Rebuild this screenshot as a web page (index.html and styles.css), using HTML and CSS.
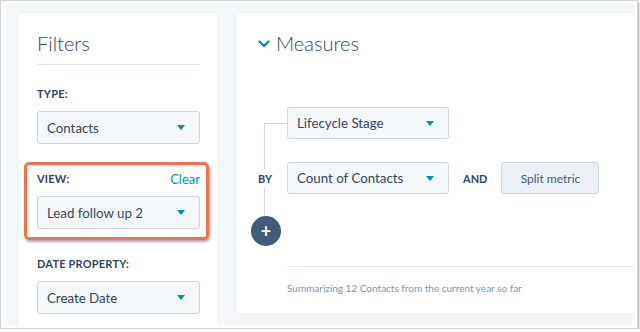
FILE: index.html
```html
<!DOCTYPE html>
<html>
<head>
    <link rel="stylesheet" href="styles.css">
</head>
<body>
    <div class="shot">
        <div class="app">
            <div class="panel filters">
                <h2 class="filters-title">Filters</h2>

                <div class="field">
                    <div class="label-row"><span class="label">TYPE:</span></div>
                    <div class="select"><span>Contacts</span><i class="caret"></i></div>
                </div>

                <div class="field view-field">
                    <div class="label-row"><span class="label">VIEW:</span><a class="clear">Clear</a></div>
                    <div class="select"><span>Lead follow up 2</span><i class="caret"></i></div>
                    <div class="highlight"></div>
                </div>

                <div class="field">
                    <div class="label-row"><span class="label">DATE PROPERTY:</span></div>
                    <div class="select"><span>Create Date</span><i class="caret"></i></div>
                </div>
            </div>

            <div class="panel measures">
                <h2 class="measures-title">
                    <svg class="chevron" width="12" height="8" viewBox="0 0 12 8"><path d="M1.5 1.5 L6 6 L10.5 1.5" fill="none" stroke="#0091ae" stroke-width="2.2" stroke-linecap="round" stroke-linejoin="round"/></svg>
                    Measures
                </h2>

                <div class="tree">
                    <div class="tree-line"></div>
                    <div class="tree-row">
                        <div class="select small"><span>Lifecycle Stage</span><i class="caret"></i></div>
                    </div>
                    <div class="tree-row">
                        <span class="by">BY</span>
                        <div class="select small"><span>Count of Contacts</span><i class="caret"></i></div>
                        <span class="and">AND</span>
                        <button class="split">Split metric</button>
                    </div>
                    <div class="add"><span>+</span></div>
                </div>

                <div class="summary">Summarizing 12 Contacts from the current year so far</div>
            </div>
        </div>
    </div>
</body>
</html>
```

FILE: styles.css
```css
body {
    margin: 0;
    font-family: Lato, "Open Sans", sans-serif;
    color: #33475b;
    background: #fff;
}

.shot {
    box-sizing: border-box;
    width: 638px;
    height: 329px;
    padding: 3px 3px 3px 5px;
    border: 1px solid #d4d4d4;
    box-shadow: 1px 2px 2px rgba(0, 0, 0, 0.35);
    background: #fff;
}

.app {
    display: flex;
    align-items: flex-start;
    gap: 16px;
    height: 100%;
    padding: 8px 0 0 11px;
    box-sizing: border-box;
    background: #f5f8fa;
    overflow: hidden;
}

.panel {
    background: #fff;
    border: 1px solid #eaf0f6;
    border-radius: 3px;
    box-sizing: border-box;
}

.filters {
    position: relative;
    align-self: stretch;
    width: 202px;
    padding: 0 18px 0 19px;
    border-bottom: none;
    border-radius: 3px 3px 0 0;
}

.filters-title {
    margin: 0;
    padding: 18px 0 9px;
    font-size: 20px;
    font-weight: 300;
    line-height: 24px;
    border-bottom: 1px solid #dfe3eb;
}

.field {
    margin-top: 20px;
}

.field + .field {
    margin-top: 26px;
}

.label-row {
    display: flex;
    justify-content: space-between;
    align-items: center;
    height: 16px;
    margin-bottom: 10px;
}

.label {
    font-size: 11px;
    font-weight: 700;
    letter-spacing: 0.2px;
}

.clear {
    margin-top: 2px;
    font-size: 13px;
    color: #0091ae;
}

.select {
    display: flex;
    align-items: center;
    justify-content: space-between;
    height: 33px;
    padding: 0 14px 0 9px;
    box-sizing: border-box;
    background: #f5f8fa;
    border: 1px solid #cbd6e2;
    border-radius: 3px;
    font-size: 13.3px;
}

.caret {
    width: 0;
    height: 0;
    border-left: 4.5px solid transparent;
    border-right: 4.5px solid transparent;
    border-top: 5px solid #0091ae;
}

.view-field {
    position: relative;
}

.highlight {
    position: absolute;
    left: -13px;
    right: -9px;
    top: -8px;
    bottom: -11px;
    border: 3px solid #f0714c;
    border-radius: 5px;
    box-shadow: 1px 2px 3px rgba(0, 0, 0, 0.35);
}

.measures {
    flex: 1;
    border-right: none;
    border-radius: 3px 0 0 3px;
    padding: 0 0 20px 22px;
}

.measures-title {
    display: flex;
    align-items: center;
    gap: 6px;
    margin: 0;
    padding: 18px 0 0;
    font-size: 20px;
    font-weight: 300;
    line-height: 24px;
}

.chevron {
    margin-top: 2px;
}

.tree {
    position: relative;
    margin-top: 52px;
    padding-left: 29px;
}

.tree-line {
    position: absolute;
    left: 6px;
    top: 16px;
    width: 22px;
    height: 93px;
    border-left: 1px solid #cbd6e2;
    border-top: 1px solid #cbd6e2;
}

.tree-row {
    display: flex;
    align-items: center;
}

.tree-row + .tree-row {
    margin-top: 23px;
}

.select.small {
    width: 162px;
    height: 32px;
}

.by {
    position: absolute;
    left: 0;
    font-size: 11px;
    font-weight: 700;
    background: #fff;
    padding: 3px 0;
}

.and {
    margin: 0 14px;
    font-size: 11px;
    font-weight: 700;
}

.split {
    width: 98px;
    height: 32px;
    background: #eaf0f6;
    border: 1px solid #cbd6e2;
    border-radius: 3px;
    font-family: inherit;
    font-size: 12px;
    color: #425b76;
}

.add {
    position: absolute;
    left: -7px;
    top: 109px;
    display: flex;
    align-items: center;
    justify-content: center;
    width: 30px;
    height: 30px;
    border-radius: 50%;
    background: #425b76;
    color: #fff;
    font-size: 18px;
    font-weight: 700;
}

.summary {
    margin: 72px 0 0 29px;
    padding-top: 15px;
    border-top: 1px solid #dfe3eb;
    font-size: 10px;
    line-height: 12px;
    color: #7c98b6;
}
```
